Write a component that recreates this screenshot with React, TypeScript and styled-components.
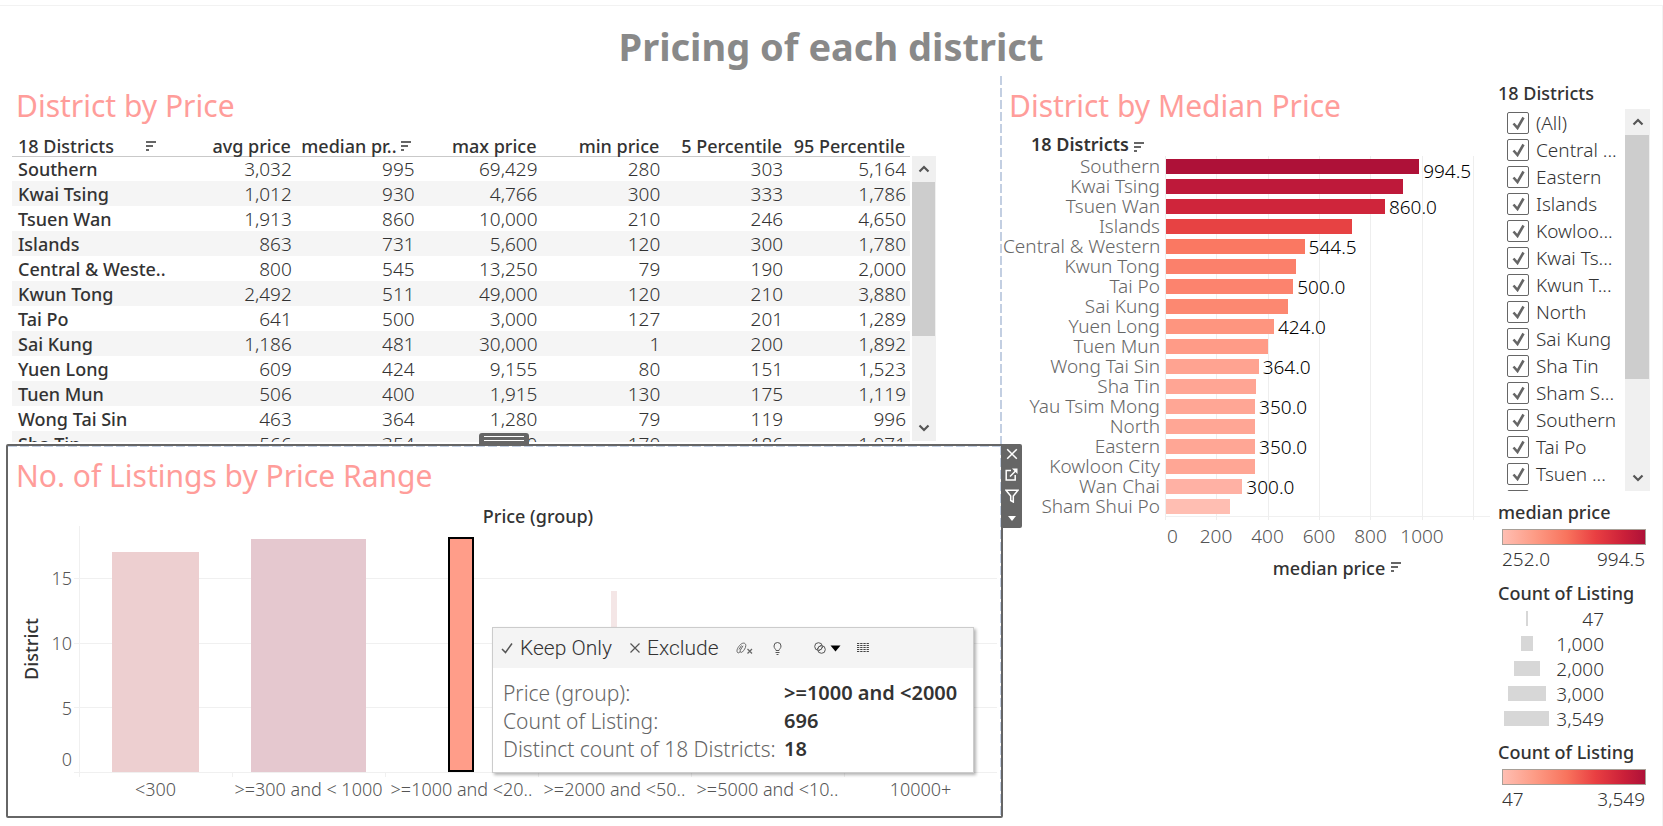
import React from 'react';
import styled, { createGlobalStyle, css } from 'styled-components';

const GlobalStyle = createGlobalStyle`
  *, *::before, *::after { box-sizing: border-box; }
  body { margin: 0; background: #fff; }
  body, button, input, table { font-family: 'Noto Sans', 'Open Sans', sans-serif; }
  button { appearance: none; border: 0; padding: 0; margin: 0; background: none; color: inherit; cursor: pointer; }
  h1, h2, h3, p, ul, ol, dl, dd, dt { margin: 0; padding: 0; list-style: none; }
`;

const dash = (dir: string) =>
  `repeating-linear-gradient(${dir}, #c3cfe2 0 9px, transparent 9px 12px)`;

/* ---------- page frame ---------- */

const Page = styled.div`
  min-height: 100vh;
  padding-top: 5px;
  color: #333;
  white-space: nowrap;
`;

const Sheet = styled.div`
  border-top: 1px solid #f2f2f2;
  border-right: 1px solid #f2f2f2;
  min-height: calc(100vh - 5px);
  padding-top: 14px;
`;

const PageTitle = styled.h1`
  font-size: 38px;
  font-weight: 700;
  line-height: 52px;
  text-align: center;
  color: #898989;
`;

const Columns = styled.main`
  display: grid;
  grid-template-columns: minmax(0, 1fr) 493px 166px;
  align-items: start;
  padding-top: 4px;
`;

const LeftColumn = styled.div`
  background: ${dash('to bottom')} right 1px top 0 / 2px 100% no-repeat;
`;

const SheetTitle = styled.h2`
  font-size: 30px;
  font-weight: 400;
  line-height: 40px;
  color: #ff9d9a;
`;

const SortGlyph = styled.svg`
  width: 10px;
  height: 10px;
  flex: none;
`;

const SortIcon = () => (
  <SortGlyph viewBox="0 0 10 10" aria-hidden="true">
    <path d="M0 1h10M0 5h7M0 9h3" stroke="#666" strokeWidth="2" fill="none" />
  </SortGlyph>
);

/* ---------- scroll bar ---------- */

const ScrollTrack = styled.div<{ $width: number }>`
  flex: none;
  width: ${p => p.$width}px;
  display: flex;
  flex-direction: column;
  background: #f0f0f0;
`;

const ScrollThumb = styled.div<{ $share: number }>`
  height: ${p => p.$share}%;
  margin-right: 1px;
  background: #cdcdcd;
`;

const ScrollButton = styled.button`
  height: 26px;
  display: grid;
  place-items: center;
  &:last-child { margin-top: auto; }
`;

const ScrollBar = ({ width, share }: { width: number; share: number }) => (
  <ScrollTrack $width={width}>
    <ScrollButton aria-label="Scroll up">
      <svg width="12" height="10" viewBox="0 0 12 10"><path d="M1.500 7.500 6 3l4.500 4.500" stroke="#555" strokeWidth="2.200" fill="none" /></svg>
    </ScrollButton>
    <ScrollThumb $share={share} />
    <ScrollButton aria-label="Scroll down">
      <svg width="12" height="10" viewBox="0 0 12 10"><path d="M1.500 2.500 6 7l4.500-4.500" stroke="#555" strokeWidth="2.200" fill="none" /></svg>
    </ScrollButton>
  </ScrollTrack>
);

/* ---------- district table ---------- */

const TableSection = styled.section`
  height: 368px;
  padding: 10px 67px 0 12px;
  ${SheetTitle} { padding-left: 4px; margin-bottom: 6px; }
`;

const TableViewport = styled.div`
  display: flex;
  gap: 2px;
  height: 310px;
  overflow: hidden;
  ${ScrollTrack} { margin: 24px 0 1px; }
`;

const TableArea = styled.div`
  flex: 1;
  min-width: 0;
`;

const Table = styled.table`
  width: 100%;
  table-layout: fixed;
  border-collapse: collapse;
  font-size: 18px;
  thead th {
    height: 24px;
    padding: 4px 5px 0 0;
    font-weight: 500;
    line-height: 20px;
    text-align: right;
  }
  thead th:first-child { width: 161px; padding-left: 6px; }
  tbody tr:nth-child(even) { background: #f5f5f5; }
  tbody tr:first-child > * { box-shadow: inset 0 1px #c9c9c9; }
  tbody th {
    padding: 2px 0 0 6px;
    font-weight: 500;
    line-height: 23px;
    text-align: left;
  }
  td {
    padding: 2px 4px 0 0;
    font-size: 19px;
    font-weight: 300;
    line-height: 23px;
    text-align: right;
  }
`;

const HeadCell = styled.div<{ $wide?: boolean }>`
  display: flex;
  align-items: center;
  justify-content: ${p => (p.$wide ? 'flex-start' : 'flex-end')};
  gap: ${p => (p.$wide ? 32 : 4)}px;
  ${p => !p.$wide && css`margin-right: 3px;`}
`;

const tableRows = [
  ['Southern', '3,032', '995', '69,429', '280', '303', '5,164'],
  ['Kwai Tsing', '1,012', '930', '4,766', '300', '333', '1,786'],
  ['Tsuen Wan', '1,913', '860', '10,000', '210', '246', '4,650'],
  ['Islands', '863', '731', '5,600', '120', '300', '1,780'],
  ['Central & Weste..', '800', '545', '13,250', '79', '190', '2,000'],
  ['Kwun Tong', '2,492', '511', '49,000', '120', '210', '3,880'],
  ['Tai Po', '641', '500', '3,000', '127', '201', '1,289'],
  ['Sai Kung', '1,186', '481', '30,000', '1', '200', '1,892'],
  ['Yuen Long', '609', '424', '9,155', '80', '151', '1,523'],
  ['Tuen Mun', '506', '400', '1,915', '130', '175', '1,119'],
  ['Wong Tai Sin', '463', '364', '1,280', '79', '119', '996'],
  ['Sha Tin', '566', '354', '3,000', '170', '186', '1,071'],
];

const DistrictTable = () => (
  <TableSection>
    <SheetTitle>District by Price</SheetTitle>
    <TableViewport>
      <TableArea>
        <Table>
          <thead>
            <tr>
              <th scope="col"><HeadCell $wide>18 Districts<SortIcon /></HeadCell></th>
              <th scope="col">avg price</th>
              <th scope="col"><HeadCell>median pr..<SortIcon /></HeadCell></th>
              <th scope="col">max price</th>
              <th scope="col">min price</th>
              <th scope="col">5 Percentile</th>
              <th scope="col">95 Percentile</th>
            </tr>
          </thead>
          <tbody>
            {tableRows.map(([name, ...cells]) => (
              <tr key={name}>
                <th scope="row">{name}</th>
                {cells.map((c, i) => <td key={i}>{c}</td>)}
              </tr>
            ))}
          </tbody>
        </Table>
      </TableArea>
      <ScrollBar width={24} share={54} />
    </TableViewport>
  </TableSection>
);

/* ---------- listings by price range ---------- */

const Panel = styled.section`
  position: relative;
  margin-left: 6px;
  height: 374px;
  padding: 10px 4px 0 0;
  border: 2px solid #666;
  border-radius: 2px;
  background:
    ${dash('to right')} left top / 100% 1px no-repeat,
    ${dash('to bottom')} right top / 1px 100% no-repeat,
    #fff;
  ${SheetTitle} { padding-left: 8px; margin-bottom: 10px; }
`;

const Grip = styled.button`
  position: absolute;
  left: 471px;
  bottom: 100%;
  width: 50px;
  height: 13px;
  padding: 3px 5px;
  display: flex;
  flex-direction: column;
  gap: 3px;
  border-radius: 3px 3px 0 0;
  background: #666;
  &::before, &::after { content: ''; width: 100%; height: 1px; background: #fff; }
`;

const PanelTools = styled.div`
  position: absolute;
  z-index: 1;
  top: -2px;
  left: 100%;
  width: 21px;
  height: 84px;
  display: grid;
  grid-template-rows: 20px 20px 24px 20px;
  border-radius: 0 2px 2px 0;
  background: #666;
  button { display: grid; place-items: center; }
  path { fill: none; stroke: #fff; stroke-width: 1.5; }
`;

const BarChart = styled.div`
  display: grid;
  grid-template-columns: 36px 28px minmax(0, 1fr);
  grid-template-rows: 20px 246px auto;
`;

const AxisCaption = styled.div`
  font-size: 18px;
  font-weight: 500;
  line-height: 20px;
  text-align: center;
`;

const TopCaption = styled(AxisCaption)`
  grid-column: 3;
  padding-left: 7px;
`;

const SideCaption = styled(AxisCaption)`
  grid-column: 1;
  justify-self: end;
  align-self: center;
  width: 26px;
  line-height: 26px;
  writing-mode: vertical-rl;
  transform: rotate(180deg);
`;

const YLabels = styled.ol`
  padding-top: 40px;
  text-align: right;
  font-size: 18px;
  font-weight: 300;
  line-height: 24px;
  color: #555;
  li { height: 65px; }
  li:nth-child(3) { height: 51px; }
  li:last-child { height: 24px; }
`;

const Plot = styled.div`
  --rule: linear-gradient(#f0f0f0, #f0f0f0);
  margin-left: 2px;
  padding: 0 1px 0 5px;
  display: grid;
  grid-template-columns: repeat(6, 1fr);
  align-items: end;
  justify-items: center;
  background:
    var(--rule) 0 52px / 100% 1px no-repeat,
    var(--rule) 0 117px / 100% 1px no-repeat,
    var(--rule) 0 181px / 100% 1px no-repeat,
    var(--rule) 5px 0 / 1px 100% no-repeat;
`;

const Bar = styled.div<{ $size: number; $tall: number; $fill: string; $selected?: boolean }>`
  width: ${p => p.$size}%;
  height: ${p => p.$tall}px;
  background: ${p => p.$fill};
  ${p => p.$selected && css`border: 2px solid #000;`}
`;

const Categories = styled.ol`
  grid-column: 3;
  margin-left: 2px;
  padding-left: 5px;
  display: grid;
  grid-template-columns: repeat(6, 1fr);
  border-top: 1px solid #f0f0f0;
  li {
    padding-top: 4px;
    font-size: 18px;
    font-weight: 300;
    line-height: 24px;
    text-align: center;
    color: #555;
    background: linear-gradient(#f0f0f0, #f0f0f0) left top / 1px 4px no-repeat;
  }
`;

const ranges = [
  { label: '<300', size: 57, tall: 220, fill: '#edcfd0' },
  { label: '>=300 and < 1000', size: 75, tall: 233, fill: '#e5c8cf' },
  { label: '>=1000 and <20..', size: 17, tall: 235, fill: '#ff9d89', selected: true },
  { label: '>=2000 and <50..', size: 4, tall: 181, fill: '#f4e6e6' },
  { label: '>=5000 and <10..', size: 1, tall: 0, fill: '#f4e6e6' },
  { label: '10000+', size: 1, tall: 0, fill: '#f4e6e6' },
];

const Tooltip = styled.div`
  position: absolute;
  top: 181px;
  left: 484px;
  width: 482px;
  border: 1px solid #ccc;
  background: #fff;
  box-shadow: 2px 2px 3px rgba(0, 0, 0, 0.3);
`;

const Commands = styled.div`
  height: 40px;
  display: flex;
  align-items: center;
  background: #f4f4f4;
  padding-left: 8px;
  svg { display: block; }
`;

const Command = styled.button<{ $gap: number }>`
  display: flex;
  align-items: center;
  gap: 7px;
  margin-right: ${p => p.$gap}px;
  font-family: Roboto, sans-serif;
  font-size: 21px;
  font-weight: 300;
  line-height: 28px;
`;

const Facts = styled.dl`
  display: grid;
  grid-template-columns: 281px 1fr;
  padding: 11px 0 9px 10px;
  line-height: 28px;
  dt { font-size: 21px; font-weight: 300; color: #666; }
  dd { font-size: 20px; font-weight: 600; }
`;

const ListingsPanel = () => (
  <Panel>
    <Grip aria-label="Move sheet" />
    <SheetTitle>No. of Listings by Price Range</SheetTitle>
    <BarChart>
      <TopCaption>Price (group)</TopCaption>
      <SideCaption>District</SideCaption>
      <YLabels><li>15</li><li>10</li><li>5</li><li>0</li></YLabels>
      <Plot>
        {ranges.map(r => <Bar key={r.label} $size={r.size} $tall={r.tall} $fill={r.fill} $selected={r.selected} />)}
      </Plot>
      <Categories>{ranges.map(r => <li key={r.label}>{r.label}</li>)}</Categories>
    </BarChart>

    <PanelTools>
      <button aria-label="Remove from dashboard">
        <svg width="12" height="12" viewBox="0 0 12 12"><path d="M1.200 1.200l9.600 9.600M10.800 1.200l-9.600 9.600" /></svg>
      </button>
      <button aria-label="Go to sheet">
        <svg width="13" height="13" viewBox="0 0 13 13"><path d="M6 2.500H1.200v9.500h9V7M5 8.500l6.500-6.500" /><path d="M7 .5h5.500V6z" style={{ fill: '#fff', stroke: 'none' }} /></svg>
      </button>
      <button aria-label="Use as filter">
        <svg width="14" height="14" viewBox="0 0 14 14"><path d="M1 1.200h12L8.300 7v6l-2.600-1.500V7z" /></svg>
      </button>
      <button aria-label="More options">
        <svg width="8" height="5" viewBox="0 0 8 5"><path d="M0 0h8L4 5z" style={{ fill: '#fff', stroke: 'none' }} /></svg>
      </button>
    </PanelTools>

    <Tooltip role="tooltip">
      <Commands>
        <Command $gap={18}>
          <svg width="12" height="12" viewBox="0 0 12 12"><path d="M1 7l3.500 3.500L11 1.500" stroke="#555" strokeWidth="1.500" fill="none" /></svg>
          Keep Only
        </Command>
        <Command $gap={17}>
          <svg width="10" height="10" viewBox="0 0 10 10"><path d="M.5.5l9 9M9.500.5l-9 9" stroke="#555" strokeWidth="1.200" fill="none" /></svg>
          Exclude
        </Command>
        <Command $gap={20} aria-label="Ungroup members">
          <svg width="17" height="12" viewBox="0 0 17 12" fill="none" stroke="#666">
            <path d="M1.500 10.500C0 8.500 2 5 4.500 2.500 7 .3 9.800.8 9.800 3.500c0 2.500-2 5-3.500 6.500-1.500 1-2.800 0-2-1.800L7 3.800M1.500 10.500c1 .8 2 .2 2.800-1M3 7.500l2.500-4" />
            <path d="M11.500 7l4.500 4.500M16 7l-4.500 4.500" strokeWidth="1.200" />
          </svg>
        </Command>
        <Command $gap={32} aria-label="Explain data">
          <svg width="9" height="13" viewBox="0 0 9 13" fill="none" stroke="#555">
            <path d="M3 8.500C3 7.200 1 6.500 1 4a3.500 3.500 0 0 1 7 0c0 2.500-2 3.200-2 4.500zM2.500 10.500h4M3.500 12.500h2" />
          </svg>
        </Command>
        <Command $gap={16} aria-label="Create set">
          <svg width="27" height="12" viewBox="0 0 27 12">
            <g fill="none" stroke="#555"><circle cx="4.500" cy="4.500" r="3.800" /><circle cx="7.500" cy="7.500" r="3.800" /><path d="M3 7l4-4M5 9l4-4" strokeWidth=".8" /></g>
            <path d="M16.500 3.500h10l-5 6z" fill="#000" />
          </svg>
        </Command>
        <Command $gap={0} aria-label="View data">
          <svg width="12" height="10" viewBox="0 0 12 10"><path d="M0 .5h12M0 2.500h12M0 4.500h12M0 6.500h12M0 8.500h12" stroke="#444" strokeWidth="1" strokeDasharray="2.300 .9" /></svg>
        </Command>
      </Commands>
      <Facts>
        <dt>Price (group):</dt><dd>&gt;=1000 and &lt;2000</dd>
        <dt>Count of Listing:</dt><dd>696</dd>
        <dt>Distinct count of 18 Districts:</dt><dd>18</dd>
      </Facts>
    </Tooltip>
  </Panel>
);

/* ---------- median price chart ---------- */

const MedianSection = styled.section`
  padding-top: 10px;
  ${SheetTitle} { padding-left: 6px; margin-bottom: 6px; }
`;

const MedianGrid = styled.div`
  display: grid;
  grid-template-columns: 157px minmax(0, 1fr);
`;

const RowCaption = styled.h3`
  display: flex;
  align-items: center;
  gap: 5px;
  height: 24px;
  padding-left: 28px;
  font-size: 18px;
  font-weight: 600;
  svg { margin-top: 6px; }
`;

const NameList = styled.ol`
  text-align: right;
  font-size: 19px;
  font-weight: 300;
  line-height: 20px;
  color: #666;
`;

const MedianPlot = styled.div`
  position: relative;
  margin-left: 5px;
  margin-right: 6px;
  border-bottom: 1px solid #f0f0f0;
`;

const GridLines = styled.div`
  position: absolute;
  inset: 0 16px -4px 0;
  display: grid;
  grid-template-columns: repeat(6, 1fr);
  border-right: 1px solid #eee;
  span { border-left: 1px solid #eee; }
`;

const BarRows = styled.ol`
  position: relative;
  margin: 0 16px 0 1px;
  li { display: flex; height: 20px; align-items: center; gap: 4px; }
`;

const MedianBar = styled.div<{ $value: number; $fill: string }>`
  width: ${p => p.$value / 12.1}%;
  height: 15px;
  margin-top: 1px;
  background: ${p => p.$fill};
`;

const BarValue = styled.span<{ $first?: boolean }>`
  font-size: 19px;
  font-weight: 300;
  line-height: 20px;
  color: #000;
  padding-top: ${p => (p.$first ? 9 : 2)}px;
`;

const XLabels = styled.ol`
  grid-column: 2;
  display: grid;
  grid-template-columns: repeat(6, 1fr);
  margin: 7px 22px 8px 5px;
  font-size: 19px;
  font-weight: 300;
  line-height: 24px;
  color: #555;
  li { margin: 0 26px 0 -26px; display: flex; justify-content: center; width: 51px; }
  li:first-child { margin: 0; padding-left: 2px; justify-content: flex-start; }
`;

const XCaption = styled.div`
  grid-column: 2;
  display: flex;
  align-items: center;
  justify-content: center;
  gap: 6px;
  padding-left: 18px;
  font-size: 18px;
  font-weight: 500;
  line-height: 24px;
  svg { margin-top: -2px; }
`;

const medians = [
  { name: 'Southern', value: 994.5, fill: '#ae1138', shown: true },
  { name: 'Kwai Tsing', value: 930, fill: '#be193a' },
  { name: 'Tsuen Wan', value: 860, fill: '#cf253b', shown: true },
  { name: 'Islands', value: 731, fill: '#e74243' },
  { name: 'Central & Western', value: 544.5, fill: '#fa7862', shown: true },
  { name: 'Kwun Tong', value: 510, fill: '#fb806b' },
  { name: 'Tai Po', value: 500, fill: '#fc836e', shown: true },
  { name: 'Sai Kung', value: 481, fill: '#fc8871' },
  { name: 'Yuen Long', value: 424, fill: '#fe957f', shown: true },
  { name: 'Tuen Mun', value: 400, fill: '#ff9b87' },
  { name: 'Wong Tai Sin', value: 364, fill: '#ffa391', shown: true },
  { name: 'Sha Tin', value: 354, fill: '#ffa594' },
  { name: 'Yau Tsim Mong', value: 350, fill: '#ffa695', shown: true },
  { name: 'North', value: 350, fill: '#ffa695' },
  { name: 'Eastern', value: 350, fill: '#ffa695', shown: true },
  { name: 'Kowloon City', value: 350, fill: '#ffa695' },
  { name: 'Wan Chai', value: 300, fill: '#ffb1a4', shown: true },
  { name: 'Sham Shui Po', value: 252, fill: '#ffbeb2' },
];

const MedianChart = () => (
  <MedianSection>
    <SheetTitle>District by Median Price</SheetTitle>
    <RowCaption>18 Districts<SortIcon /></RowCaption>
    <MedianGrid>
      <NameList>{medians.map(m => <li key={m.name}>{m.name}</li>)}</NameList>
      <MedianPlot>
        <GridLines><span /><span /><span /><span /><span /><span /></GridLines>
        <BarRows>
          {medians.map((m, i) => (
            <li key={m.name}>
              <MedianBar $value={m.value} $fill={m.fill} />
              {m.shown && <BarValue $first={i === 0}>{m.value.toFixed(1)}</BarValue>}
            </li>
          ))}
        </BarRows>
      </MedianPlot>
      <XLabels>{[0, 200, 400, 600, 800, 1000].map(n => <li key={n}>{n}</li>)}</XLabels>
      <XCaption>median price<SortIcon /></XCaption>
    </MedianGrid>
  </MedianSection>
);

/* ---------- filters and legends ---------- */

const SideBar = styled.aside`
  padding: 5px 12px 0 2px;
`;

const LegendTitle = styled.h3`
  font-size: 18px;
  font-weight: 500;
  line-height: 24px;
`;

const FilterBox = styled.div`
  display: flex;
  justify-content: space-between;
  height: 382px;
  margin: 4px 0 9px;
  padding-left: 9px;
  overflow: hidden;
`;

const FilterItem = styled.label`
  display: grid;
  grid-template-columns: 22px auto;
  align-items: center;
  column-gap: 7px;
  height: 27px;
  font-size: 19px;
  font-weight: 300;
  line-height: 26px;
  svg { grid-area: 1 / 1; justify-self: center; pointer-events: none; }
`;

const FilterCheck = styled.input`
  appearance: none;
  grid-area: 1 / 1;
  width: 22px;
  height: 22px;
  margin: 0;
  border: 1px solid #666;
  border-radius: 2px;
`;

const filterNames = ['(All)', 'Central ...', 'Eastern', 'Islands', 'Kowloo...', 'Kwai Ts...', 'Kwun T...', 'North',
  'Sai Kung', 'Sha Tin', 'Sham S...', 'Southern', 'Tai Po', 'Tsuen ...', 'Tuen M...'];

const Ramp = styled.div`
  height: 16px;
  margin: 5px 4px 2px;
  border: 1px solid #a89f97;
  background: linear-gradient(to right, #ffbeb2, #fd9c86 22%, #f8735d 45%, #e93f42 65%, #cb2039 85%, #ae1138);
`;

const RampEnds = styled.div`
  display: flex;
  justify-content: space-between;
  margin: 0 5px 10px 4px;
  font-size: 19px;
  font-weight: 300;
  line-height: 24px;
`;

const SizeList = styled.ul`
  margin: 1px 46px 9px 3px;
  li {
    display: grid;
    grid-template-columns: 51px 1fr;
    height: 25px;
    align-items: center;
    font-size: 19px;
    font-weight: 300;
    line-height: 24px;
    text-align: right;
  }
`;

const SizeMark = styled.span<{ $size: number }>`
  justify-self: center;
  width: ${p => p.$size}px;
  height: 15px;
  background: #d7d7d7;
`;

const sizes: [string, number][] = [['47', 2], ['1,000', 12], ['2,000', 26], ['3,000', 38], ['3,549', 45]];

const ColorLegend = ({ title, low, high }: { title: string; low: string; high: string }) => (
  <section>
    <LegendTitle>{title}</LegendTitle>
    <Ramp />
    <RampEnds><span>{low}</span><span>{high}</span></RampEnds>
  </section>
);

const Legends = () => (
  <SideBar>
    <LegendTitle>18 Districts</LegendTitle>
    <FilterBox>
      <div>
        {filterNames.map(n => (
          <FilterItem key={n}>
            <FilterCheck type="checkbox" defaultChecked />
            <svg width="13" height="14" viewBox="0 0 13 14"><path d="M1.500 7.500l4 4.500L11.500 1.500" stroke="#666" strokeWidth="2.600" fill="none" /></svg>
            <span>{n}</span>
          </FilterItem>
        ))}
      </div>
      <ScrollBar width={25} share={64} />
    </FilterBox>
    <ColorLegend title="median price" low="252.0" high="994.5" />
    <LegendTitle>Count of Listing</LegendTitle>
    <SizeList>
      {sizes.map(([n, w]) => <li key={n}><SizeMark $size={w} />{n}</li>)}
    </SizeList>
    <ColorLegend title="Count of Listing" low="47" high="3,549" />
  </SideBar>
);

export default function App() {
  return (
    <Page>
      <GlobalStyle />
      <Sheet>
        <PageTitle>Pricing of each district</PageTitle>
        <Columns>
          <LeftColumn>
            <DistrictTable />
            <ListingsPanel />
          </LeftColumn>
          <MedianChart />
          <Legends />
        </Columns>
      </Sheet>
    </Page>
  );
}
